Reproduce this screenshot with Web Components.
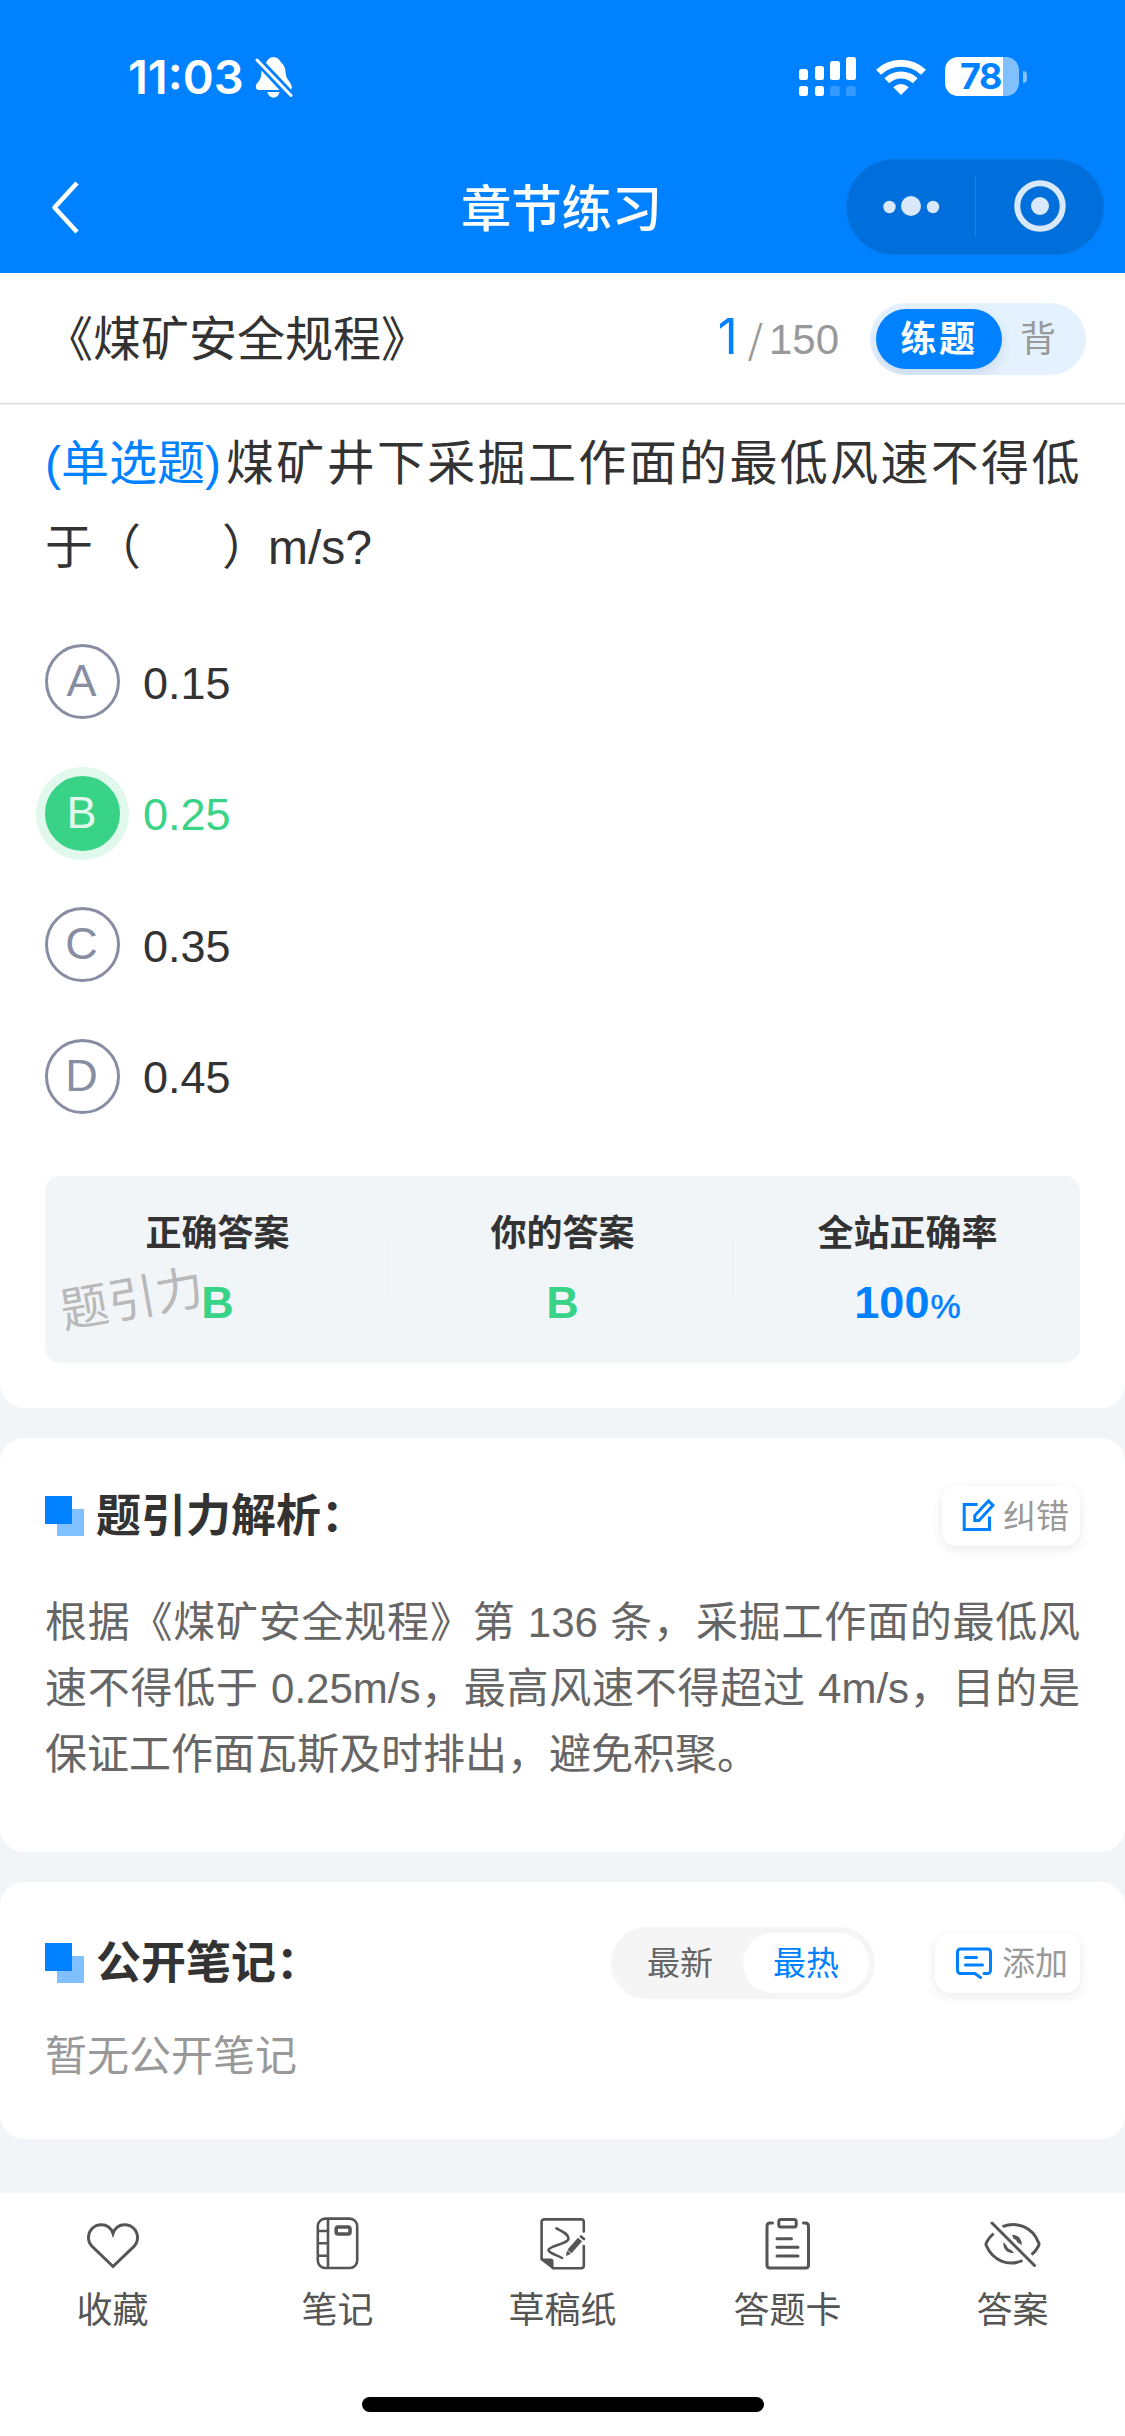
<!DOCTYPE html>
<html lang="zh-CN">
<head>
<meta charset="utf-8">
<title>章节练习</title>
<style>
html,body{margin:0;padding:0}
body{width:1125px;height:2436px;overflow:hidden;background:#f1f5f8;color:#333;
  font-family:"Liberation Sans","Noto Sans CJK SC",sans-serif;
  --blue:#0081ff;--green:#39d387;--line:#888da4}
</style>
</head>
<body>
<practice-app></practice-app>
<script>
function define(name, css, html) {
  customElements.define(name, class extends HTMLElement {
    constructor() {
      super();
      this.attachShadow({ mode: 'open' }).innerHTML =
        '<style>*{box-sizing:border-box}' + css + '</style>' + html;
    }
  });
}

define('status-bar', `
:host{display:flex;height:150px;padding:3px 98px 0 128px;align-items:center;justify-content:space-between;color:#fff;box-sizing:border-box;font-family:Inter,sans-serif}
.l,.r{display:flex;align-items:center}
.t{font-size:47px;font-weight:600;letter-spacing:0;line-height:60px;width:127px;white-space:nowrap}
.r{gap:18px}
svg{display:block}
.bat{width:74px;height:39px;border-radius:13px;background:linear-gradient(90deg,#fff 58px,#80c0ff 58px);color:var(--blue);
 font-size:36px;font-weight:650;line-height:39px;padding-left:15px;letter-spacing:-1.4px}
.b{display:flex;align-items:center;gap:4px}
.nub{width:4px;height:12px;background:#80c0ff;border-radius:0 4px 4px 0}
`, `
<div class="l"><span class="t">11:03</span>
<svg width="38" height="42" viewBox="0 0 38 42" fill="#fff"><path d="M11 7C12 4 15 1 18.500 1S25 4 26 6.500C29.500 9 30.500 13 30.800 18C31.200 23 35.500 26 36.500 29.500C37 31 36.500 33 36 33.500Z"/><path d="M6.500 14.500L24.500 34H4C.5 34 .3 30 1.600 28C3.500 25 6.500 24 6.500 14.500Z"/><path d="M12.500 36H24.500C24 39.500 21.500 41.500 18.500 41.500S13 39.500 12.500 36Z"/><path d="M2 4L36 40" stroke="#0081ff" stroke-width="6"/><path d="M2 4L36 39.500" stroke="#fff" stroke-width="3" stroke-linecap="round"/></svg></div>
<div class="r">
<svg width="58" height="40" viewBox="0 0 58 40" fill="#fff"><rect y="12" width="9" height="11" rx="2.500"/><rect x="16" y="9" width="9" height="14" rx="2.500"/><rect x="31" y="4" width="10" height="19" rx="2.500"/><rect x="47" width="10" height="23" rx="2.500"/><rect y="29" width="9" height="10" rx="2.500"/><rect x="16" y="29" width="9" height="10" rx="2.500"/><g opacity=".2"><rect x="31" y="29" width="10" height="10" rx="2.500"/><rect x="47" y="29" width="10" height="10" rx="2.500"/></g></svg>
<svg width="52" height="38" viewBox="0 0 52 38" fill="none" stroke="#fff" stroke-width="7"><path d="M3.500 14.300A32.500 32.500 0 0 1 48.500 14.300"/><path d="M11.800 22.700A20.500 20.500 0 0 1 40.200 22.700"/><path d="M26 37L18.200 29.300Q26 22.500 33.800 29.300Z" fill="#fff" stroke="none"/></svg>
<div class="b"><div class="bat">78</div><div class="nub"></div></div>
</div>`);

define('nav-bar', `
:host{display:grid;grid-template-columns:279px 1fr 279px;height:123px;align-items:center;box-sizing:border-box;padding-bottom:9px}
h1{margin:0;padding-top:6px;text-align:center;color:#fff;font-size:50.500px;font-weight:500;line-height:90px;letter-spacing:-.2px;text-indent:-2px}
.back{display:block;margin-left:48px}
.cap{width:258px;height:96px;border-radius:48px;background:#006edb;border:1px solid #0876e0;display:flex;align-items:center;justify-self:start}
.cap svg{display:block}
`, `
<svg class="back" width="32" height="56" viewBox="0 0 32 56" fill="none" stroke="#fff" stroke-width="4.600" stroke-linejoin="round"><path d="M29 4L6.500 28.500L29 53"/></svg>
<h1>章节练习</h1>
<div class="cap"><svg width="256" height="94" viewBox="0 0 256 94"><g fill="#d9e8fa"><circle cx="42.500" cy="47" r="6.200"/><circle cx="64" cy="46" r="10"/><circle cx="86" cy="47" r="6.200"/><circle cx="193" cy="46" r="9"/></g><circle cx="193" cy="46" r="22.700" fill="none" stroke="#d9e8fa" stroke-width="6"/><path d="M128.500 17V77" stroke="#1f80e0"/></svg></div>`);

define('pill-switch', `
:host{display:flex;height:72px;padding:6px;border-radius:36px;box-sizing:border-box;background:#e4f1ff}
::slotted(*){box-sizing:border-box;height:60px;line-height:58px;padding-top:2px;border-radius:30px;text-align:center;width:126px}
::slotted([active]){background:var(--on-bg,#0081ff);color:var(--on-color,#fff);box-shadow:var(--on-shadow,none)}
`, `<slot></slot>`);

define('progress-bar', `
:host{display:flex;height:131px;padding:1px 39px 0 45px;align-items:center;background:#fff;border-bottom:1px solid #dadada;box-shadow:0 1px 0 #f2f2f2;position:relative;box-sizing:border-box}
.name{font-size:48px;flex:1;line-height:60px;padding-top:3px}
.n{display:flex;align-items:baseline;color:#999;font-size:42px;line-height:60px}
.n b{font-family:Inter,sans-serif;font-weight:400;font-size:49px;color:var(--blue);margin-right:10px}
.n i{font-family:"Noto Sans CJK SC",sans-serif;font-size:39px;font-style:normal;margin-right:6px}
pill-switch{margin-left:31px;font-size:36px;color:#999;overflow:hidden;--on-shadow:0 6px 12px rgba(100,120,150,.18)}
.a{font-weight:700;letter-spacing:2.500px}
.o{width:72px}
.e{width:6px}
`, `
<span class="name">《煤矿安全规程》</span>
<span class="n"><b>1</b><i>/</i><span>150</span></span>
<pill-switch><span active class="a">练题</span><span class="o">背</span><span class="e"></span></pill-switch>`);

define('question-stem', `
:host{display:block;font-size:48px;line-height:84px;white-space:nowrap}
.row{display:flex}
.tag{color:var(--blue);margin-right:5px}
.q{letter-spacing:2.340px}
.close{margin-left:81px}
.u{margin-left:-2px}
`, `
<div class="row"><span class="tag">(单选题)</span><span class="q">煤矿井下采掘工作面的最低风速不得低</span></div>
<div class="row"><span>于（</span><span class="close">）</span><span class="u">m/s?</span></div>`);

define('answer-option', `
:host{display:flex;height:75px;align-items:center;font-size:45px;gap:23px}
.k{width:75px;height:75px;border-radius:50%;border:3px solid var(--line);color:var(--line);text-align:center;line-height:67px;text-indent:-2px}
.v{line-height:75px;padding-top:3px}
:host([right]){color:var(--green)}
:host([right]) .k{background:var(--green);border-color:var(--green);color:#e1f8ec;box-shadow:0 0 0 9px #e1f8ec}
`, `<span class="k"><slot name="key"></slot></span><span class="v"><slot></slot></span>`);

define('result-cell', `
:host{display:flex;flex-direction:column;align-items:center;width:345px;box-sizing:border-box}
:host([divided]){background:linear-gradient(#f0eded,#f0eded) 343px 30px/1px 60px no-repeat}
.h{font-size:36px;font-weight:700;line-height:50px}
.v{font-size:45px;font-weight:700;line-height:60px;margin-top:14px;color:var(--c)}
`, `<span class="h"><slot name="label"></slot></span><span class="v"><slot></slot></span>`);

define('result-panel', `
:host{display:flex;align-items:flex-start;height:187px;padding-top:33px;border-radius:15px;background:#f1f5f8;box-sizing:border-box;position:relative}
small{font-size:34px;font-weight:400;-webkit-text-stroke:.5px currentColor;margin-left:1px}
.wm{position:absolute;left:15px;top:94px;font-size:48px;line-height:60px;color:#b9b9b9;transform:rotate(-10deg)}
`, `
<result-cell divided style="--c:#39d387"><span slot="label">正确答案</span>B</result-cell>
<result-cell divided style="--c:#39d387"><span slot="label">你的答案</span>B</result-cell>
<result-cell style="--c:#0081ff"><span slot="label">全站正确率</span>100<small>%</small></result-cell>
<span class="wm">题引力</span>`);

define('section-head', `
:host{display:flex;align-items:center;height:60px}
.m{display:block;margin-right:12px}
h2{margin:0;padding-top:2px;flex:1;font-size:45px;font-weight:700;line-height:58px}
`, `
<svg class="m" width="39" height="40" viewBox="0 0 39 40"><path d="M12 13H39V40H12Z" fill="#80c0ff"/><path d="M0 0H27V28H0Z" fill="#0081ff"/></svg>
<h2><slot></slot></h2><slot name="tools"></slot>`);

define('tool-button', `
:host{display:flex;height:60px;align-items:center;border-radius:15px;background:#fff;box-shadow:0 3px 12px rgba(0,0,0,.09);font-size:33px;color:#999;white-space:nowrap;box-sizing:border-box}
.t{line-height:58px;padding-top:2px}
::slotted(svg){display:block;flex:none}
`, `<slot name="icon"></slot><span class="t"><slot></slot></span>`);

define('tab-item', `
:host{display:flex;flex-direction:column;align-items:center;flex:1;color:#555;font-size:36px}
.t{line-height:50px;margin-top:13px}
::slotted(svg){display:block}
`, `<slot name="icon"></slot><span class="t"><slot></slot></span>`);

define('tab-bar', `
:host{display:flex;flex-direction:column;align-items:center;height:243px;background:#fff;box-sizing:border-box;padding-top:20px}
.r{display:flex;width:1125px;height:184px}
.home{width:402px;height:15px;border-radius:8px;background:#000}
`, `
<div class="r">
<tab-item><svg slot="icon" width="60" height="60" viewBox="0 0 60 60" fill="none" stroke="#555" stroke-width="3"><path d="M30 20.500C28 14.500 23.500 11.700 18.300 11.700C11 11.700 5.500 17.500 5.500 24.500C5.500 28.500 7 31.300 9 33.300L30 53.500L51 33.300C53 31.300 54.500 28.500 54.500 24.500C54.500 17.500 49 11.700 41.700 11.700C36.500 11.700 32 14.500 30 20.500Z"/></svg>收藏</tab-item>
<tab-item><svg slot="icon" width="60" height="60" viewBox="0 0 60 60" fill="none" stroke="#555" stroke-width="2.600"><rect x="9.800" y="5.600" width="39.400" height="49.400" rx="7.500"/><path d="M20 5V55M10 18H20M10 30.300H20M10 42.700H20"/><rect x="28.200" y="14" width="13.800" height="7" rx="2" stroke-width="3.600"/></svg>笔记</tab-item>
<tab-item><svg slot="icon" width="60" height="60" viewBox="0 0 60 60" fill="none" stroke="#555" stroke-width="2.600" stroke-linecap="round"><path d="M50.800 18.500V9Q50.800 6.400 48.200 6.400H11.500Q8.600 6.400 8.600 9V46L20.500 55.200H48.200Q50.800 55.200 50.800 52.500V33"/><path d="M8 45.500H17.500Q20.500 45.500 20.500 48.500V57Z" fill="#555" stroke="none"/><path d="M23.500 15.300C28 18 35.500 20.500 35.500 25.500C35.500 31 16 32.500 15.500 37C15.300 40 24 42 29 45"/><path d="M36.500 38.500L47 26.500" stroke-width="5.500" stroke-linecap="butt"/><path d="M33.500 42L34.500 38L37 40.500Z" fill="#555" stroke-width="1"/><path d="M48 23.500L51 26" stroke-width="2.600"/></svg>草稿纸</tab-item>
<tab-item><svg slot="icon" width="60" height="60" viewBox="0 0 60 60" fill="none" stroke="#555" stroke-width="3" stroke-linecap="round"><path d="M14.500 10H12Q9 10 9 13.500V52Q9 55 12 55H47.500Q50.500 55 50.500 52V13.500Q50.500 10 47.500 10H45.500M19 25.700H33.500M19 34.300H40M19 43H40"/><rect x="20.800" y="6.500" width="17.400" height="7.500" rx="2"/></svg>答题卡</tab-item>
<tab-item><svg slot="icon" width="60" height="60" viewBox="0 0 60 60" fill="none" stroke="#555" stroke-width="3"><path d="M19.500 13.700C34 8 49.500 14 55.500 29.500Q56.500 31.500 55.500 33Q53 38 48.500 41.700M10.500 20.500Q6 24.500 3.500 29.500Q2.500 31.500 3.500 33C10 47.500 25 54 39.500 47.500"/><path d="M9 10L51.500 52.500" stroke-linecap="round"/><path d="M29 22C35 21.500 39 26 38.800 32L34.500 29.500Q33.500 26.500 30.500 25.500ZM20.500 29C19.500 35.500 24.500 41 31 39.800L28 36.800Q24.500 36 23.500 32.500Z" fill="#555" stroke="none"/></svg>答案</tab-item>
</div><div class="home"></div>`);

define('practice-app', `
:host{display:flex;flex-direction:column;height:2436px}
header{background:var(--blue)}
section{background:#fff;padding:0 45px;border-radius:24px}
.q{height:1004px;border-radius:0 0 24px 24px;padding-top:18px}
.opts{display:flex;flex-direction:column;gap:56.500px;margin:54px 0 62.500px}
.ex{height:414px;margin-top:30px;padding-top:48px}
.ex p{margin:44px 0 0;font-size:42px;line-height:66px;color:#666;text-align:justify;text-spacing-trim:space-all}
.notes{height:257px;margin:30px 0 54px;padding-top:51px}
.notes p{margin:31px 0 0;font-size:42px;line-height:66px;color:#999}
.tools{display:flex;align-items:center;gap:60px}
pill-switch{background:#f5f5f5;--on-bg:#fff;--on-color:#0081ff;font-size:33px;color:#666}
`, `
<header><status-bar></status-bar><nav-bar></nav-bar></header>
<progress-bar></progress-bar>
<section class="q">
<question-stem></question-stem>
<div class="opts">
<answer-option><span slot="key">A</span>0.15</answer-option>
<answer-option right><span slot="key">B</span>0.25</answer-option>
<answer-option><span slot="key">C</span>0.35</answer-option>
<answer-option><span slot="key">D</span>0.45</answer-option>
</div>
<result-panel></result-panel>
</section>
<section class="ex">
<section-head>题引力解析：
<tool-button slot="tools" style="width:138px;padding-left:18px"><svg slot="icon" width="43" height="38" viewBox="0 0 43 38" fill="none" stroke="#0081ff" stroke-width="3"><path d="M17.500 7.500H4.200V32.500H29.500V19.500"/><path d="M14.800 23.500V18.500L28.500 4L33 8.300L19 23.500Z"/></svg>纠错</tool-button>
</section-head>
<p>根据《煤矿安全规程》第 136 条，采掘工作面的最低风速不得低于 0.25m/s，最高风速不得超过 4m/s，目的是保证工作面瓦斯及时排出，避免积聚。</p>
</section>
<section class="notes">
<section-head>公开笔记：
<div slot="tools" class="tools"><pill-switch><span>最新</span><span active>最热</span></pill-switch>
<tool-button style="width:145px;padding-left:19px"><svg slot="icon" width="48" height="36" viewBox="0 0 48 36" fill="none" stroke="#0081ff" stroke-width="3" stroke-linecap="round"><path d="M30 28.500H33.500a3 3 0 0 0 3-3V7a3 3 0 0 0-3-3H6.500a3 3 0 0 0-3 3V25.500a3 3 0 0 0 3 3H21L26.500 32.500M11.500 12.500H22.500M11.500 20H28.500"/></svg>添加</tool-button></div>
</section-head>
<p>暂无公开笔记</p>
</section>
<tab-bar></tab-bar>`);
</script>
</body>
</html>
